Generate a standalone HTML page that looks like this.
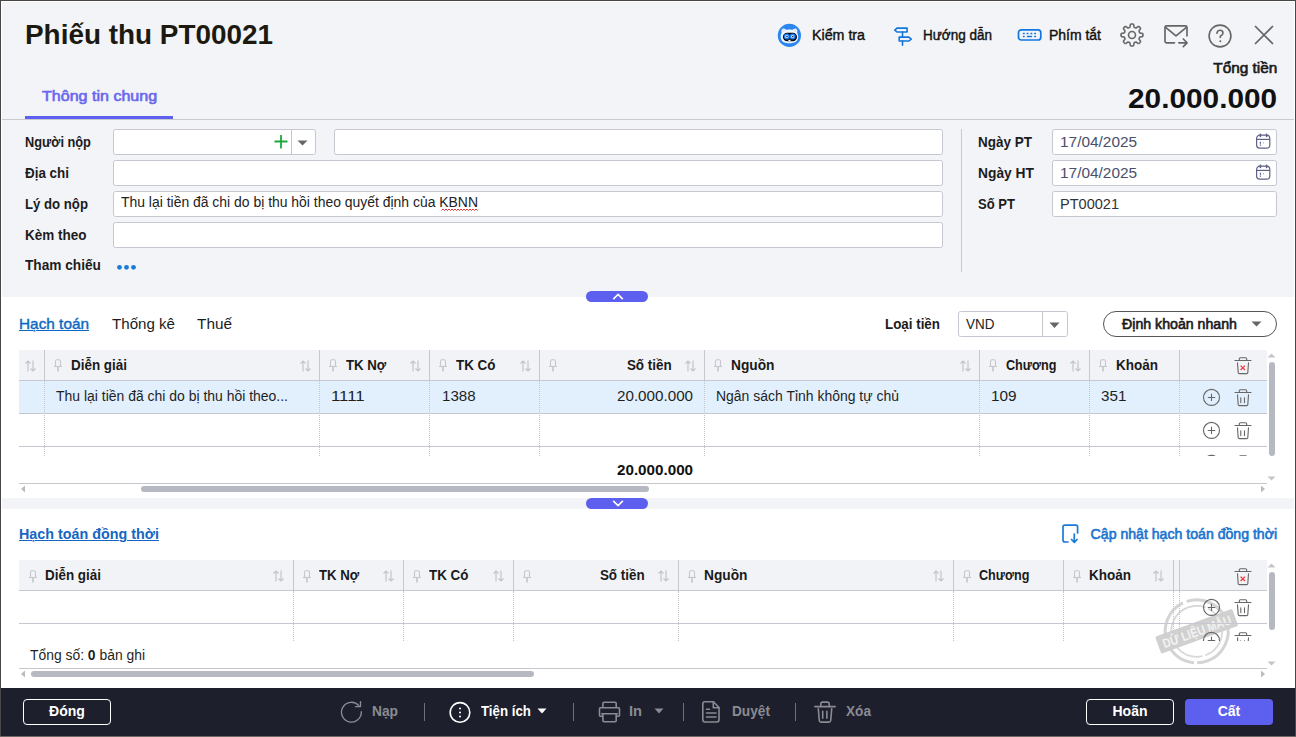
<!DOCTYPE html>
<html><head><meta charset="utf-8"><style>
html,body{margin:0;padding:0;width:1296px;height:737px;overflow:hidden;background:#fff}
body{position:relative;font-family:"Liberation Sans", sans-serif}
.t{position:absolute;white-space:nowrap;line-height:1}
svg{overflow:visible}
</style></head><body>
<div style="position:absolute;left:0px;top:0px;width:1296px;height:737px;background:#484746"></div>
<div style="position:absolute;left:1px;top:1px;width:1294px;height:735px;background:#ffffff"></div>
<div style="position:absolute;left:2px;top:2px;width:1292px;height:117px;background:#f3f4f8"></div>
<div style="position:absolute;left:2px;top:119px;width:1292px;height:1px;background:#c9cacf"></div>
<div style="position:absolute;left:2px;top:120px;width:1292px;height:177px;background:#f3f4f8"></div>
<div style="position:absolute;left:2px;top:498px;width:1292px;height:11px;background:#f3f4f8"></div>
<div style="position:absolute;left:1px;top:688px;width:1294px;height:48px;background:#1e1f2d"></div>
<div style="position:absolute;left:0px;top:736px;width:1296px;height:1px;background:#6b6865"></div>
<div class="t" style="top:20.59px;font-size:27.3px;font-weight:700;color:#1c1a10;left:25.3px;transform:scaleX(1.0218);transform-origin:left;">Phiếu thu PT00021</div>
<svg style="position:absolute;left:777px;top:23px;" width="25" height="25" viewBox="0 0 25 25"><circle cx="12.4" cy="12.4" r="11.6" fill="#2b86f0"/>
<path d="M4.6 10 C4.2 7.5 4.6 5.6 6.2 5.4 C7.6 5.3 8.8 6.2 9.6 6.9 C11.4 6.5 13.4 6.5 15.2 6.9 C16 6.2 17.2 5.3 18.6 5.4 C20.2 5.6 20.6 7.5 20.2 10 C21.4 12 21.4 14.5 20.6 16.5 C19.2 19.6 16 20.2 12.4 20.2 C8.8 20.2 5.6 19.6 4.2 16.5 C3.4 14.5 3.4 12 4.6 10 Z" fill="#f2f7ff"/><path d="M5.6 9 C5.5 7.4 5.8 6.4 6.6 6.4 C7.4 6.4 8.2 7 8.6 7.6 Z M19.2 9 C19.3 7.4 19 6.4 18.2 6.4 C17.4 6.4 16.6 7 16.2 7.6 Z" fill="#cfe0fb"/>
<rect x="5.9" y="9.8" width="14.1" height="8.5" rx="4.2" fill="#050608"/>
<circle cx="9.8" cy="13.6" r="3" fill="#1f7ff0"/><circle cx="15.6" cy="13.6" r="3" fill="#1f7ff0"/>
<circle cx="9.8" cy="13.6" r="1.5" fill="#e8f0ff"/><circle cx="15.6" cy="13.6" r="1.5" fill="#e8f0ff"/>
<circle cx="10" cy="13.6" r="0.8" fill="#1a1f3a"/><circle cx="15.8" cy="13.6" r="0.8" fill="#1a1f3a"/>
<rect x="11.4" y="16.8" width="2.2" height="1.2" fill="#fff"/></svg>
<div class="t" style="top:28.15px;font-size:14px;font-weight:400;color:#111;-webkit-text-stroke:0.4px #111;left:812.3px;transform:scaleX(1.0171);transform-origin:left;">Kiểm tra</div>
<svg style="position:absolute;left:893px;top:26px;" width="20" height="20" viewBox="0 0 20 20"><g fill="none" stroke="#1177dd" stroke-width="1.6" stroke-linejoin="round" stroke-linecap="round">
<path d="M4 2.1 H14.1 V6.0 H4 L1.8 4.05 Z"/><path d="M6.2 11.1 H15.9 L18.3 13.05 L15.9 15.0 H6.2 Z"/><path d="M9.5 6.0 V11.1 M9.5 15.0 V19.2"/></g></svg>
<div class="t" style="top:27.85px;font-size:14px;font-weight:400;color:#111;-webkit-text-stroke:0.4px #111;left:922.8px;transform:scaleX(0.9648);transform-origin:left;">Hướng dẫn</div>
<svg style="position:absolute;left:1017px;top:28px;" width="25" height="14" viewBox="0 0 25 14"><rect x="1.5" y="1.8" width="22.3" height="10.2" rx="2.8" fill="none" stroke="#1177dd" stroke-width="1.7"/>
<g fill="#1177dd"><rect x="5.8" y="4.8" width="2" height="1.5" rx="0.5"/><rect x="9.5" y="4.8" width="2" height="1.5" rx="0.5"/><rect x="13.4" y="4.8" width="2" height="1.5" rx="0.5"/><rect x="17.1" y="4.8" width="2" height="1.5" rx="0.5"/>
<rect x="5.8" y="7.8" width="2" height="1.5" rx="0.5"/><rect x="9.9" y="7.8" width="5.3" height="1.5" rx="0.5"/><rect x="17.1" y="7.8" width="2" height="1.5" rx="0.5"/></g></svg>
<div class="t" style="top:27.85px;font-size:14px;font-weight:400;color:#111;-webkit-text-stroke:0.4px #111;left:1049.3px;transform:scaleX(0.9973);transform-origin:left;">Phím tắt</div>
<svg style="position:absolute;left:1120px;top:23px;" width="24" height="24" viewBox="0 0 24 24"><path d="M12.00 1.00 L12.29 1.01 L12.57 1.03 L12.86 1.08 L13.14 1.18 L13.40 1.37 L13.63 1.74 L13.79 2.36 L13.89 3.11 L13.99 3.72 L14.12 4.10 L14.28 4.31 L14.46 4.44 L14.64 4.54 L14.83 4.62 L15.02 4.70 L15.21 4.78 L15.41 4.85 L15.61 4.92 L15.83 4.95 L16.09 4.92 L16.45 4.74 L16.95 4.38 L17.56 3.92 L18.11 3.59 L18.53 3.49 L18.85 3.54 L19.11 3.67 L19.35 3.84 L19.57 4.02 L19.78 4.22 L19.98 4.43 L20.16 4.65 L20.33 4.89 L20.46 5.15 L20.51 5.47 L20.41 5.89 L20.08 6.44 L19.62 7.05 L19.26 7.55 L19.08 7.91 L19.05 8.17 L19.08 8.39 L19.15 8.59 L19.22 8.79 L19.30 8.98 L19.38 9.17 L19.46 9.36 L19.56 9.54 L19.69 9.72 L19.90 9.88 L20.28 10.01 L20.89 10.11 L21.64 10.21 L22.26 10.37 L22.63 10.60 L22.82 10.86 L22.92 11.14 L22.97 11.43 L22.99 11.71 L23.00 12.00 L22.99 12.29 L22.97 12.57 L22.92 12.86 L22.82 13.14 L22.63 13.40 L22.26 13.63 L21.64 13.79 L20.89 13.89 L20.28 13.99 L19.90 14.12 L19.69 14.28 L19.56 14.46 L19.46 14.64 L19.38 14.83 L19.30 15.02 L19.22 15.21 L19.15 15.41 L19.08 15.61 L19.05 15.83 L19.08 16.09 L19.26 16.45 L19.62 16.95 L20.08 17.56 L20.41 18.11 L20.51 18.53 L20.46 18.85 L20.33 19.11 L20.16 19.35 L19.98 19.57 L19.78 19.78 L19.57 19.98 L19.35 20.16 L19.11 20.33 L18.85 20.46 L18.53 20.51 L18.11 20.41 L17.56 20.08 L16.95 19.62 L16.45 19.26 L16.09 19.08 L15.83 19.05 L15.61 19.08 L15.41 19.15 L15.21 19.22 L15.02 19.30 L14.83 19.38 L14.64 19.46 L14.46 19.56 L14.28 19.69 L14.12 19.90 L13.99 20.28 L13.89 20.89 L13.79 21.64 L13.63 22.26 L13.40 22.63 L13.14 22.82 L12.86 22.92 L12.57 22.97 L12.29 22.99 L12.00 23.00 L11.71 22.99 L11.43 22.97 L11.14 22.92 L10.86 22.82 L10.60 22.63 L10.37 22.26 L10.21 21.64 L10.11 20.89 L10.01 20.28 L9.88 19.90 L9.72 19.69 L9.54 19.56 L9.36 19.46 L9.17 19.38 L8.98 19.30 L8.79 19.22 L8.59 19.15 L8.39 19.08 L8.17 19.05 L7.91 19.08 L7.55 19.26 L7.05 19.62 L6.44 20.08 L5.89 20.41 L5.47 20.51 L5.15 20.46 L4.89 20.33 L4.65 20.16 L4.43 19.98 L4.22 19.78 L4.02 19.57 L3.84 19.35 L3.67 19.11 L3.54 18.85 L3.49 18.53 L3.59 18.11 L3.92 17.56 L4.38 16.95 L4.74 16.45 L4.92 16.09 L4.95 15.83 L4.92 15.61 L4.85 15.41 L4.78 15.21 L4.70 15.02 L4.62 14.83 L4.54 14.64 L4.44 14.46 L4.31 14.28 L4.10 14.12 L3.72 13.99 L3.11 13.89 L2.36 13.79 L1.74 13.63 L1.37 13.40 L1.18 13.14 L1.08 12.86 L1.03 12.57 L1.01 12.29 L1.00 12.00 L1.01 11.71 L1.03 11.43 L1.08 11.14 L1.18 10.86 L1.37 10.60 L1.74 10.37 L2.36 10.21 L3.11 10.11 L3.72 10.01 L4.10 9.88 L4.31 9.72 L4.44 9.54 L4.54 9.36 L4.62 9.17 L4.70 8.98 L4.78 8.79 L4.85 8.59 L4.92 8.39 L4.95 8.17 L4.92 7.91 L4.74 7.55 L4.38 7.05 L3.92 6.44 L3.59 5.89 L3.49 5.47 L3.54 5.15 L3.67 4.89 L3.84 4.65 L4.02 4.43 L4.22 4.22 L4.43 4.02 L4.65 3.84 L4.89 3.67 L5.15 3.54 L5.47 3.49 L5.89 3.59 L6.44 3.92 L7.05 4.38 L7.55 4.74 L7.91 4.92 L8.17 4.95 L8.39 4.92 L8.59 4.85 L8.79 4.78 L8.98 4.70 L9.17 4.62 L9.36 4.54 L9.54 4.44 L9.72 4.31 L9.88 4.10 L10.01 3.72 L10.11 3.11 L10.21 2.36 L10.37 1.74 L10.60 1.37 L10.86 1.18 L11.14 1.08 L11.43 1.03 L11.71 1.01Z" fill="none" stroke="#666" stroke-width="1.6" stroke-linejoin="round"/><circle cx="12" cy="12" r="3.5" fill="none" stroke="#666" stroke-width="1.6"/></svg>
<svg style="position:absolute;left:1163px;top:24px;" width="26" height="24" viewBox="0 0 26 24"><g fill="none" stroke="#666" stroke-width="1.65" stroke-linecap="round" stroke-linejoin="round">
<path d="M11.5 18.8 H3.5 Q2 18.8 2 17.3 V3.2 Q2 1.9 3.5 1.9 H22.5 Q24 1.9 24 3.4 V12"/><path d="M2.6 3.3 L13 11.8 L23.4 3.3"/>
<path d="M15.8 18.8 H24 M20.3 15 L24.1 18.8 L20.3 22.6"/></g></svg>
<svg style="position:absolute;left:1207px;top:23px;" width="26" height="26" viewBox="0 0 26 26"><circle cx="13" cy="13" r="10.9" fill="none" stroke="#666" stroke-width="1.6"/>
<path d="M9.9 10.3 Q10.2 7.2 13.1 7.2 Q16 7.2 16 10 Q16 12 13.3 13.2 V14.5" fill="none" stroke="#666" stroke-width="1.6" stroke-linecap="round"/><circle cx="13.3" cy="18.3" r="1" fill="#666"/></svg>
<svg style="position:absolute;left:1253px;top:24px;" width="22" height="22" viewBox="0 0 22 22"><path d="M2 2 L20 20 M20 2 L2 20" stroke="#666" stroke-width="1.7"/></svg>
<div class="t" style="top:61.15px;font-size:14px;font-weight:400;color:#1a1a1a;-webkit-text-stroke:0.6px #1a1a1a;right:19px;transform:scaleX(1.0980);transform-origin:right;">Tổng tiền</div>
<div class="t" style="top:85.94px;font-size:27px;font-weight:700;color:#111;right:19px;transform:scaleX(1.1033);transform-origin:right;">20.000.000</div>
<div class="t" style="top:89.25px;font-size:14px;font-weight:400;color:#6a67ee;-webkit-text-stroke:0.6px #6a67ee;left:42px;transform:scaleX(1.1468);transform-origin:left;">Thông tin chung</div>
<div style="position:absolute;left:25px;top:116px;width:148px;height:3px;background:#5d5fef"></div>
<div class="t" style="top:134.95px;font-size:14px;font-weight:700;color:#1c1c1c;left:25.3px;transform:scaleX(0.9131);transform-origin:left;">Người nộp</div>
<div class="t" style="top:165.85px;font-size:14px;font-weight:700;color:#1c1c1c;left:25.3px;transform:scaleX(0.9576);transform-origin:left;">Địa chỉ</div>
<div class="t" style="top:196.85px;font-size:14px;font-weight:700;color:#1c1c1c;left:25.3px;transform:scaleX(0.9410);transform-origin:left;">Lý do nộp</div>
<div class="t" style="top:227.85px;font-size:14px;font-weight:700;color:#1c1c1c;left:25.3px;transform:scaleX(0.9634);transform-origin:left;">Kèm theo</div>
<div class="t" style="top:258.15px;font-size:14px;font-weight:700;color:#1c1c1c;left:25.3px;transform:scaleX(0.9766);transform-origin:left;">Tham chiếu</div>
<div style="position:absolute;left:113px;top:129px;width:203px;height:26px;background:#fff;border:1px solid #c5c8d1;border-radius:2.5px;box-sizing:border-box;"></div>
<div style="position:absolute;left:291px;top:130px;width:1px;height:24px;background:#c5c7cd"></div>
<svg style="position:absolute;left:273px;top:134px;" width="15" height="15" viewBox="0 0 15 15"><path d="M8 1 V14.5 M1.5 7.5 H14.5" stroke="#1fa83a" stroke-width="1.8"/></svg>
<svg style="position:absolute;left:297px;top:140px;" width="11" height="6" viewBox="0 0 11 6"><path d="M0.5 0.5 H10.5 L5.5 5.5Z" fill="#666"/></svg>
<div style="position:absolute;left:334px;top:129px;width:609px;height:26px;background:#fff;border:1px solid #c5c8d1;border-radius:2.5px;box-sizing:border-box;"></div>
<div style="position:absolute;left:113px;top:160px;width:830px;height:26px;background:#fff;border:1px solid #c5c8d1;border-radius:2.5px;box-sizing:border-box;"></div>
<div style="position:absolute;left:113px;top:191px;width:830px;height:26px;background:#fff;border:1px solid #c5c8d1;border-radius:2.5px;box-sizing:border-box;"></div>
<div class="t" style="top:194.75px;font-size:14px;font-weight:400;color:#222;left:121.3px;transform:scaleX(0.9950);transform-origin:left;">Thu lại tiền đã chi do bị thu hồi theo quyết định của KBNN</div>
<svg style="position:absolute;left:441px;top:208px;" width="38" height="4" viewBox="0 0 38 4"><path d="M0.5 2.5 L2 1 L3.5 2.5 L5 1 L6.5 2.5 L8 1 L9.5 2.5 L11 1 L12.5 2.5 L14 1 L15.5 2.5 L17 1 L18.5 2.5 L20 1 L21.5 2.5 L23 1 L24.5 2.5 L26 1 L27.5 2.5 L29 1 L30.5 2.5 L32 1 L33.5 2.5 L35 1 L36.5 2.5" fill="none" stroke="#e02020" stroke-width="0.9"/></svg>
<div style="position:absolute;left:113px;top:222px;width:830px;height:26px;background:#fff;border:1px solid #c5c8d1;border-radius:2.5px;box-sizing:border-box;"></div>
<svg style="position:absolute;left:116px;top:264px;" width="22" height="7" viewBox="0 0 22 7"><g fill="#1b7ad6"><circle cx="3.5" cy="3.3" r="2.4"/><circle cx="10.5" cy="3.3" r="2.4"/><circle cx="17.5" cy="3.3" r="2.4"/></g></svg>
<div style="position:absolute;left:961px;top:129px;width:1px;height:143px;background:#c9cacf"></div>
<div class="t" style="top:134.95px;font-size:14px;font-weight:700;color:#1c1c1c;left:978.3px;transform:scaleX(0.9634);transform-origin:left;">Ngày PT</div>
<div class="t" style="top:165.85px;font-size:14px;font-weight:700;color:#1c1c1c;left:978.3px;transform:scaleX(0.9857);transform-origin:left;">Ngày HT</div>
<div class="t" style="top:196.85px;font-size:14px;font-weight:700;color:#1c1c1c;left:978.3px;transform:scaleX(0.9309);transform-origin:left;">Số PT</div>
<div style="position:absolute;left:1052px;top:129px;width:225px;height:26px;background:#fff;border:1px solid #c5c8d1;border-radius:2.5px;box-sizing:border-box;"></div>
<div style="position:absolute;left:1052px;top:160px;width:225px;height:26px;background:#fff;border:1px solid #c5c8d1;border-radius:2.5px;box-sizing:border-box;"></div>
<div style="position:absolute;left:1052px;top:191px;width:225px;height:26px;background:#fff;border:1px solid #c5c8d1;border-radius:2.5px;box-sizing:border-box;"></div>
<div class="t" style="top:135.35px;font-size:14px;font-weight:400;color:#4a4f6a;left:1060px;transform:scaleX(1.1002);transform-origin:left;">17/04/2025</div>
<div class="t" style="top:166.35px;font-size:14px;font-weight:400;color:#4a4f6a;left:1060px;transform:scaleX(1.1002);transform-origin:left;">17/04/2025</div>
<div class="t" style="top:197.15px;font-size:14px;font-weight:400;color:#333;left:1060px;transform:scaleX(1.0389);transform-origin:left;">PT00021</div>
<svg style="position:absolute;left:1256px;top:133px;" width="15" height="17" viewBox="0 0 15 17"><g fill="none" stroke="#5e6384" stroke-width="1.2"><rect x="0.6" y="2.2" width="13.2" height="13" rx="3.2"/><path d="M0.6 6.4 H13.8"/></g><path d="M4.4 1.3 V3.3 M10.6 1.3 V3.3" stroke="#5e6384" stroke-width="1.7" stroke-linecap="round"/><g fill="#5e6384"><rect x="3.8" y="8.8" width="1.2" height="2"/><rect x="6.8" y="9.2" width="1.2" height="1.2" opacity="0.5"/><rect x="3.8" y="11.5" width="1.3" height="1.2"/></g></svg>
<svg style="position:absolute;left:1256px;top:164px;" width="15" height="17" viewBox="0 0 15 17"><g fill="none" stroke="#5e6384" stroke-width="1.2"><rect x="0.6" y="2.2" width="13.2" height="13" rx="3.2"/><path d="M0.6 6.4 H13.8"/></g><path d="M4.4 1.3 V3.3 M10.6 1.3 V3.3" stroke="#5e6384" stroke-width="1.7" stroke-linecap="round"/><g fill="#5e6384"><rect x="3.8" y="8.8" width="1.2" height="2"/><rect x="6.8" y="9.2" width="1.2" height="1.2" opacity="0.5"/><rect x="3.8" y="11.5" width="1.3" height="1.2"/></g></svg>
<svg style="position:absolute;left:586px;top:291px;" width="62" height="11" viewBox="0 0 62 11"><rect x="0" y="0" width="62" height="11" rx="5.5" fill="#5d5fef"/><path d="M27.3 8.1 L32.05 3.35 L36.8 8.1" fill="none" stroke="#fff" stroke-width="1.6"/></svg>
<div class="t" style="top:315.90px;font-size:15px;font-weight:400;color:#0d68c4;-webkit-text-stroke:0.4px #0d68c4;left:18.5px;transform:scaleX(1.0239);transform-origin:left;text-decoration:underline;text-underline-offset:1px;text-decoration-thickness:1.3px;">Hạch toán</div>
<div class="t" style="top:315.90px;font-size:15px;font-weight:400;color:#1c1c1c;left:111.5px;transform:scaleX(1.0074);transform-origin:left;">Thống kê</div>
<div class="t" style="top:315.90px;font-size:15px;font-weight:400;color:#1c1c1c;left:196.5px;transform:scaleX(1.0240);transform-origin:left;">Thuế</div>
<div class="t" style="top:316.85px;font-size:14px;font-weight:700;color:#1c1c1c;left:885.3px;transform:scaleX(0.9547);transform-origin:left;">Loại tiền</div>
<div style="position:absolute;left:958px;top:311px;width:110px;height:26px;background:#fff;border:1px solid #c5c8d1;border-radius:2.5px;box-sizing:border-box;"></div>
<div style="position:absolute;left:1042px;top:312px;width:1px;height:24px;background:#c5c7cd"></div>
<svg style="position:absolute;left:1049px;top:322px;" width="11" height="7" viewBox="0 0 11 7"><path d="M0.5 0.5 H10.5 L5.5 6Z" fill="#666"/></svg>
<div class="t" style="top:317.15px;font-size:14px;font-weight:400;color:#222;left:966px;transform:scaleX(0.9628);transform-origin:left;">VND</div>
<div style="position:absolute;left:1103px;top:311px;width:174px;height:26px;border:1px solid #555;border-radius:13px;box-sizing:border-box;background:#fff"></div>
<div class="t" style="top:316.65px;font-size:14px;font-weight:400;color:#1a1a1a;-webkit-text-stroke:0.6px #1a1a1a;left:1122px;transform:scaleX(1.0119);transform-origin:left;">Định khoản nhanh</div>
<svg style="position:absolute;left:1251px;top:321px;" width="11" height="6" viewBox="0 0 11 6"><path d="M0.5 0.5 H10.5 L5.5 5.5Z" fill="#666"/></svg>
<div style="position:absolute;left:19px;top:350px;width:1248px;height:30px;background:#f2f3f7"></div>
<div style="position:absolute;left:19px;top:380px;width:1248px;height:1px;background:#c5c8d0"></div>
<div style="position:absolute;left:19px;top:381px;width:1248px;height:32px;background:#e2f0fd"></div>
<div style="position:absolute;left:19px;top:413px;width:1248px;height:1px;background:#c5c8d0"></div>
<div style="position:absolute;left:19px;top:446px;width:1248px;height:1px;background:#c5c8d0"></div>
<div style="position:absolute;left:44px;top:350px;width:1px;height:30px;background:#c5c8d0"></div>
<div style="position:absolute;left:44px;top:381px;width:0px;height:75px;border-left:1px dotted #c3c5cb"></div>
<div style="position:absolute;left:319px;top:350px;width:1px;height:30px;background:#c5c8d0"></div>
<div style="position:absolute;left:319px;top:381px;width:0px;height:75px;border-left:1px dotted #c3c5cb"></div>
<div style="position:absolute;left:429px;top:350px;width:1px;height:30px;background:#c5c8d0"></div>
<div style="position:absolute;left:429px;top:381px;width:0px;height:75px;border-left:1px dotted #c3c5cb"></div>
<div style="position:absolute;left:539px;top:350px;width:1px;height:30px;background:#c5c8d0"></div>
<div style="position:absolute;left:539px;top:381px;width:0px;height:75px;border-left:1px dotted #c3c5cb"></div>
<div style="position:absolute;left:704px;top:350px;width:1px;height:30px;background:#c5c8d0"></div>
<div style="position:absolute;left:704px;top:381px;width:0px;height:75px;border-left:1px dotted #c3c5cb"></div>
<div style="position:absolute;left:979px;top:350px;width:1px;height:30px;background:#c5c8d0"></div>
<div style="position:absolute;left:979px;top:381px;width:0px;height:75px;border-left:1px dotted #c3c5cb"></div>
<div style="position:absolute;left:1089px;top:350px;width:1px;height:30px;background:#c5c8d0"></div>
<div style="position:absolute;left:1089px;top:381px;width:0px;height:75px;border-left:1px dotted #c3c5cb"></div>
<div style="position:absolute;left:1179px;top:350px;width:1px;height:30px;background:#c5c8d0"></div>
<div style="position:absolute;left:1179px;top:381px;width:0px;height:75px;border-left:1px dotted #c3c5cb"></div>
<svg style="position:absolute;left:25px;top:360px;" width="11" height="12" viewBox="0 0 11 12"><g fill="none" stroke="#c3c5cb" stroke-width="1.2"><path d="M3 11.5 V1 M0.5 3.5 L3 1 L5.5 3.5"/><path d="M8 0.5 V11 M5.5 8.5 L8 11 L10.5 8.5"/></g></svg>
<svg style="position:absolute;left:54px;top:359px;" width="9" height="13" viewBox="0 0 9 13"><g fill="none" stroke="#c6c8ce" stroke-width="1.1"><path d="M1.5 7.2 V2.2 Q1.5 0.8 2.9 0.8 H5.1 Q6.5 0.8 6.5 2.2 V7.2"/><path d="M0 7.5 H8"/></g><path d="M4 7.8 V12.6" stroke="#c6c8ce" stroke-width="1.7"/></svg>
<div class="t" style="top:357.85px;font-size:14px;font-weight:700;color:#1a1a1a;left:70.9px;transform:scaleX(0.9589);transform-origin:left;">Diễn giải</div>
<svg style="position:absolute;left:300px;top:360px;" width="11" height="12" viewBox="0 0 11 12"><g fill="none" stroke="#c3c5cb" stroke-width="1.2"><path d="M3 11.5 V1 M0.5 3.5 L3 1 L5.5 3.5"/><path d="M8 0.5 V11 M5.5 8.5 L8 11 L10.5 8.5"/></g></svg>
<svg style="position:absolute;left:329px;top:359px;" width="9" height="13" viewBox="0 0 9 13"><g fill="none" stroke="#c6c8ce" stroke-width="1.1"><path d="M1.5 7.2 V2.2 Q1.5 0.8 2.9 0.8 H5.1 Q6.5 0.8 6.5 2.2 V7.2"/><path d="M0 7.5 H8"/></g><path d="M4 7.8 V12.6" stroke="#c6c8ce" stroke-width="1.7"/></svg>
<div class="t" style="top:357.85px;font-size:14px;font-weight:700;color:#1a1a1a;left:345.9px;transform:scaleX(0.9441);transform-origin:left;">TK Nợ</div>
<svg style="position:absolute;left:410px;top:360px;" width="11" height="12" viewBox="0 0 11 12"><g fill="none" stroke="#c3c5cb" stroke-width="1.2"><path d="M3 11.5 V1 M0.5 3.5 L3 1 L5.5 3.5"/><path d="M8 0.5 V11 M5.5 8.5 L8 11 L10.5 8.5"/></g></svg>
<svg style="position:absolute;left:439px;top:359px;" width="9" height="13" viewBox="0 0 9 13"><g fill="none" stroke="#c6c8ce" stroke-width="1.1"><path d="M1.5 7.2 V2.2 Q1.5 0.8 2.9 0.8 H5.1 Q6.5 0.8 6.5 2.2 V7.2"/><path d="M0 7.5 H8"/></g><path d="M4 7.8 V12.6" stroke="#c6c8ce" stroke-width="1.7"/></svg>
<div class="t" style="top:357.85px;font-size:14px;font-weight:700;color:#1a1a1a;left:455.9px;transform:scaleX(0.9573);transform-origin:left;">TK Có</div>
<svg style="position:absolute;left:520px;top:360px;" width="11" height="12" viewBox="0 0 11 12"><g fill="none" stroke="#c3c5cb" stroke-width="1.2"><path d="M3 11.5 V1 M0.5 3.5 L3 1 L5.5 3.5"/><path d="M8 0.5 V11 M5.5 8.5 L8 11 L10.5 8.5"/></g></svg>
<svg style="position:absolute;left:549px;top:359px;" width="9" height="13" viewBox="0 0 9 13"><g fill="none" stroke="#c6c8ce" stroke-width="1.1"><path d="M1.5 7.2 V2.2 Q1.5 0.8 2.9 0.8 H5.1 Q6.5 0.8 6.5 2.2 V7.2"/><path d="M0 7.5 H8"/></g><path d="M4 7.8 V12.6" stroke="#c6c8ce" stroke-width="1.7"/></svg>
<div class="t" style="top:357.85px;font-size:14px;font-weight:700;color:#1a1a1a;right:624px;transform:scaleX(0.9590);transform-origin:right;">Số tiền</div>
<svg style="position:absolute;left:685px;top:360px;" width="11" height="12" viewBox="0 0 11 12"><g fill="none" stroke="#c3c5cb" stroke-width="1.2"><path d="M3 11.5 V1 M0.5 3.5 L3 1 L5.5 3.5"/><path d="M8 0.5 V11 M5.5 8.5 L8 11 L10.5 8.5"/></g></svg>
<svg style="position:absolute;left:714px;top:359px;" width="9" height="13" viewBox="0 0 9 13"><g fill="none" stroke="#c6c8ce" stroke-width="1.1"><path d="M1.5 7.2 V2.2 Q1.5 0.8 2.9 0.8 H5.1 Q6.5 0.8 6.5 2.2 V7.2"/><path d="M0 7.5 H8"/></g><path d="M4 7.8 V12.6" stroke="#c6c8ce" stroke-width="1.7"/></svg>
<div class="t" style="top:357.85px;font-size:14px;font-weight:700;color:#1a1a1a;left:730.9px;transform:scaleX(0.9809);transform-origin:left;">Nguồn</div>
<svg style="position:absolute;left:960px;top:360px;" width="11" height="12" viewBox="0 0 11 12"><g fill="none" stroke="#c3c5cb" stroke-width="1.2"><path d="M3 11.5 V1 M0.5 3.5 L3 1 L5.5 3.5"/><path d="M8 0.5 V11 M5.5 8.5 L8 11 L10.5 8.5"/></g></svg>
<svg style="position:absolute;left:989px;top:359px;" width="9" height="13" viewBox="0 0 9 13"><g fill="none" stroke="#c6c8ce" stroke-width="1.1"><path d="M1.5 7.2 V2.2 Q1.5 0.8 2.9 0.8 H5.1 Q6.5 0.8 6.5 2.2 V7.2"/><path d="M0 7.5 H8"/></g><path d="M4 7.8 V12.6" stroke="#c6c8ce" stroke-width="1.7"/></svg>
<div class="t" style="top:357.85px;font-size:14px;font-weight:700;color:#1a1a1a;left:1005.9px;transform:scaleX(0.9023);transform-origin:left;">Chương</div>
<svg style="position:absolute;left:1070px;top:360px;" width="11" height="12" viewBox="0 0 11 12"><g fill="none" stroke="#c3c5cb" stroke-width="1.2"><path d="M3 11.5 V1 M0.5 3.5 L3 1 L5.5 3.5"/><path d="M8 0.5 V11 M5.5 8.5 L8 11 L10.5 8.5"/></g></svg>
<svg style="position:absolute;left:1099px;top:359px;" width="9" height="13" viewBox="0 0 9 13"><g fill="none" stroke="#c6c8ce" stroke-width="1.1"><path d="M1.5 7.2 V2.2 Q1.5 0.8 2.9 0.8 H5.1 Q6.5 0.8 6.5 2.2 V7.2"/><path d="M0 7.5 H8"/></g><path d="M4 7.8 V12.6" stroke="#c6c8ce" stroke-width="1.7"/></svg>
<div class="t" style="top:357.85px;font-size:14px;font-weight:700;color:#1a1a1a;left:1115.9px;transform:scaleX(0.9633);transform-origin:left;">Khoản</div>
<div class="t" style="top:388.75px;font-size:14px;font-weight:400;color:#1f1f1f;left:56.3px;transform:scaleX(0.9969);transform-origin:left;">Thu lại tiền đã chi do bị thu hồi theo...</div>
<div class="t" style="top:388.75px;font-size:14px;font-weight:400;color:#1f1f1f;left:331.3px;transform:scaleX(1.2023);transform-origin:left;">1111</div>
<div class="t" style="top:388.75px;font-size:14px;font-weight:400;color:#1f1f1f;left:441.5px;transform:scaleX(1.0777);transform-origin:left;">1388</div>
<div class="t" style="top:388.75px;font-size:14px;font-weight:400;color:#1f1f1f;right:603px;transform:scaleX(1.0857);transform-origin:right;">20.000.000</div>
<div class="t" style="top:388.75px;font-size:14px;font-weight:400;color:#1f1f1f;left:716px;transform:scaleX(0.9975);transform-origin:left;">Ngân sách Tỉnh không tự chủ</div>
<div class="t" style="top:388.75px;font-size:14px;font-weight:400;color:#1f1f1f;left:991.3px;transform:scaleX(1.0957);transform-origin:left;">109</div>
<div class="t" style="top:388.75px;font-size:14px;font-weight:400;color:#1f1f1f;left:1101.3px;transform:scaleX(1.0868);transform-origin:left;">351</div>
<svg style="position:absolute;left:1234px;top:357px;" width="18" height="18" viewBox="0 0 18 18"><g fill="none" stroke="#666" stroke-width="1.1" stroke-linecap="round" stroke-linejoin="round"><path d="M1 3.5 H17"/><path d="M5.3 3.5 V1.9 Q5.3 0.8 6.4 0.8 H11.6 Q12.7 0.8 12.7 1.9 V3.5"/><path d="M3.5 5.8 L4.2 15.6 Q4.3 16.6 5.3 16.6 H12.7 Q13.7 16.6 13.8 15.6 L14.5 5.8"/></g><path d="M6.6 8.6 L11 13 M11 8.6 L6.6 13" stroke="#f03a3a" stroke-width="1.3"/></svg>
<svg style="position:absolute;left:1202px;top:388px;" width="19" height="19" viewBox="0 0 19 19"><circle cx="9.5" cy="9.4" r="8" fill="none" stroke="#666" stroke-width="1.1"/><path d="M9.5 5.8 V13.1 M5.8 9.5 H13.2" stroke="#666" stroke-width="1.1"/></svg>
<svg style="position:absolute;left:1234px;top:389px;" width="18" height="18" viewBox="0 0 18 18"><g fill="none" stroke="#666" stroke-width="1.1" stroke-linecap="round" stroke-linejoin="round"><path d="M1 3.5 H17"/><path d="M5.3 3.5 V1.9 Q5.3 0.8 6.4 0.8 H11.6 Q12.7 0.8 12.7 1.9 V3.5"/><path d="M3.5 5.8 L4.2 15.6 Q4.3 16.6 5.3 16.6 H12.7 Q13.7 16.6 13.8 15.6 L14.5 5.8"/><path d="M6.8 8.8 V13.6 M10.5 8.8 V13.6"/></g></svg>
<svg style="position:absolute;left:1202px;top:421px;" width="19" height="19" viewBox="0 0 19 19"><circle cx="9.5" cy="9.4" r="8" fill="none" stroke="#666" stroke-width="1.1"/><path d="M9.5 5.8 V13.1 M5.8 9.5 H13.2" stroke="#666" stroke-width="1.1"/></svg>
<svg style="position:absolute;left:1234px;top:422px;" width="18" height="18" viewBox="0 0 18 18"><g fill="none" stroke="#666" stroke-width="1.1" stroke-linecap="round" stroke-linejoin="round"><path d="M1 3.5 H17"/><path d="M5.3 3.5 V1.9 Q5.3 0.8 6.4 0.8 H11.6 Q12.7 0.8 12.7 1.9 V3.5"/><path d="M3.5 5.8 L4.2 15.6 Q4.3 16.6 5.3 16.6 H12.7 Q13.7 16.6 13.8 15.6 L14.5 5.8"/><path d="M6.8 8.8 V13.6 M10.5 8.8 V13.6"/></g></svg>
<div style="position:absolute;left:1202px;top:454px;width:21px;height:2px;overflow:hidden"><svg style="position:absolute;left:0;top:0;overflow:visible" width="19" height="19" viewBox="0 0 19 19"><circle cx="9.5" cy="9.4" r="8" fill="none" stroke="#666" stroke-width="1.1"/><path d="M9.5 5.8 V13.1 M5.8 9.5 H13.2" stroke="#666" stroke-width="1.1"/></svg></div>
<div style="position:absolute;left:1234px;top:455px;width:20px;height:1px;overflow:hidden"><svg style="position:absolute;left:0;top:0;overflow:visible" width="18" height="18" viewBox="0 0 18 18"><g fill="none" stroke="#666" stroke-width="1.1" stroke-linecap="round" stroke-linejoin="round"><path d="M1 3.5 H17"/><path d="M5.3 3.5 V1.9 Q5.3 0.8 6.4 0.8 H11.6 Q12.7 0.8 12.7 1.9 V3.5"/><path d="M3.5 5.8 L4.2 15.6 Q4.3 16.6 5.3 16.6 H12.7 Q13.7 16.6 13.8 15.6 L14.5 5.8"/><path d="M6.8 8.8 V13.6 M10.5 8.8 V13.6"/></g></svg></div>
<div class="t" style="top:463.15px;font-size:14px;font-weight:700;color:#111;right:602.5px;transform:scaleX(1.0857);transform-origin:right;">20.000.000</div>
<div style="position:absolute;left:19px;top:483px;width:1248px;height:1px;background:#c5c7cd"></div>
<svg style="position:absolute;left:20px;top:485px;" width="6" height="8" viewBox="0 0 6 8"><path d="M5 0.5 V7.5 L1 4Z" fill="#b9bcc3"/></svg>
<svg style="position:absolute;left:1260px;top:485px;" width="6" height="8" viewBox="0 0 6 8"><path d="M1 0.5 V7.5 L5 4Z" fill="#b9bcc3"/></svg>
<div style="position:absolute;left:141px;top:486px;width:508px;height:6px;background:#b6b9c1;border-radius:3px"></div>
<svg style="position:absolute;left:1267px;top:352px;" width="9" height="6" viewBox="0 0 9 6"><path d="M0.5 5.5 H8.5 L4.5 1.5Z" fill="#c3c5cb"/></svg>
<div style="position:absolute;left:1269px;top:362px;width:6px;height:94px;background:#b6b9c1;border-radius:3px"></div>
<svg style="position:absolute;left:1267px;top:476px;" width="9" height="6" viewBox="0 0 9 6"><path d="M0.5 0.5 H8.5 L4.5 4.5Z" fill="#c3c5cb"/></svg>
<svg style="position:absolute;left:586px;top:498px;" width="62" height="11" viewBox="0 0 62 11"><rect x="0" y="0" width="62" height="11" rx="5.5" fill="#5d5fef"/><path d="M27.2 2.9 L32.05 7.6 L36.9 2.9" fill="none" stroke="#fff" stroke-width="1.6"/></svg>
<div class="t" style="top:526.00px;font-size:15px;font-weight:600;color:#1566c2;left:19px;transform:scaleX(0.9554);transform-origin:left;text-decoration:underline;text-underline-offset:1px;text-decoration-thickness:1.3px;">Hạch toán đồng thời</div>
<svg style="position:absolute;left:1062px;top:524px;" width="18" height="20" viewBox="0 0 18 20"><g fill="none" stroke="#1b7ad6" stroke-width="1.7" stroke-linecap="round" stroke-linejoin="round"><path d="M6 18 H3 Q1 18 1 16 V3 Q1 1.2 3 1.2 H14 Q15.6 1.2 15.6 3 V9"/><path d="M12.3 10 V18.3 M9.5 15.5 L12.3 18.3 L15.1 15.5"/></g></svg>
<div class="t" style="top:527.15px;font-size:14px;font-weight:400;color:#1b74d0;-webkit-text-stroke:0.6px #1b74d0;right:19px;transform:scaleX(1.0076);transform-origin:right;">Cập nhật hạch toán đồng thời</div>
<div style="position:absolute;left:19px;top:560px;width:1248px;height:30px;background:#f2f3f7"></div>
<svg style="position:absolute;left:1150px;top:590px;" width="100" height="80" viewBox="0 0 100 80"><g transform="translate(46.7 41.3) rotate(-20)">
<circle r="31.5" fill="none" stroke="#d4d4d4" stroke-width="3" stroke-dasharray="60 3 30 2 50 4"/><circle r="25.5" fill="none" stroke="#d8d8d8" stroke-width="1.8" stroke-dasharray="40 3 30 4 60 3"/>
<rect x="-41" y="-9" width="82" height="18" rx="1.5" fill="#d0d0d0"/>
<text x="-36" y="5" textLength="72" lengthAdjust="spacingAndGlyphs" font-family="Liberation Sans" font-weight="700" font-size="13" fill="#f2f2f2">DỮ LIỆU MẪU</text></g></svg>
<div style="position:absolute;left:19px;top:590px;width:1248px;height:1px;background:#c5c8d0"></div>
<div style="position:absolute;left:19px;top:623px;width:1248px;height:1px;background:#c5c8d0"></div>
<div style="position:absolute;left:293px;top:560px;width:1px;height:30px;background:#c5c8d0"></div>
<div style="position:absolute;left:293px;top:591px;width:0px;height:50px;border-left:1px dotted #c3c5cb"></div>
<div style="position:absolute;left:403px;top:560px;width:1px;height:30px;background:#c5c8d0"></div>
<div style="position:absolute;left:403px;top:591px;width:0px;height:50px;border-left:1px dotted #c3c5cb"></div>
<div style="position:absolute;left:513px;top:560px;width:1px;height:30px;background:#c5c8d0"></div>
<div style="position:absolute;left:513px;top:591px;width:0px;height:50px;border-left:1px dotted #c3c5cb"></div>
<div style="position:absolute;left:678px;top:560px;width:1px;height:30px;background:#c5c8d0"></div>
<div style="position:absolute;left:678px;top:591px;width:0px;height:50px;border-left:1px dotted #c3c5cb"></div>
<div style="position:absolute;left:953px;top:560px;width:1px;height:30px;background:#c5c8d0"></div>
<div style="position:absolute;left:953px;top:591px;width:0px;height:50px;border-left:1px dotted #c3c5cb"></div>
<div style="position:absolute;left:1063px;top:560px;width:1px;height:30px;background:#c5c8d0"></div>
<div style="position:absolute;left:1063px;top:591px;width:0px;height:50px;border-left:1px dotted #c3c5cb"></div>
<div style="position:absolute;left:1173px;top:560px;width:1px;height:30px;background:#c5c8d0"></div>
<div style="position:absolute;left:1173px;top:591px;width:0px;height:50px;border-left:1px dotted #c3c5cb"></div>
<div style="position:absolute;left:1179px;top:560px;width:1px;height:30px;background:#c5c8d0"></div>
<div style="position:absolute;left:1179px;top:591px;width:0px;height:50px;border-left:1px dotted #c3c5cb"></div>
<svg style="position:absolute;left:29px;top:570px;" width="9" height="13" viewBox="0 0 9 13"><g fill="none" stroke="#c6c8ce" stroke-width="1.1"><path d="M1.5 7.2 V2.2 Q1.5 0.8 2.9 0.8 H5.1 Q6.5 0.8 6.5 2.2 V7.2"/><path d="M0 7.5 H8"/></g><path d="M4 7.8 V12.6" stroke="#c6c8ce" stroke-width="1.7"/></svg>
<div class="t" style="top:567.85px;font-size:14px;font-weight:700;color:#1a1a1a;left:44.9px;transform:scaleX(0.9589);transform-origin:left;">Diễn giải</div>
<svg style="position:absolute;left:273px;top:570px;" width="11" height="12" viewBox="0 0 11 12"><g fill="none" stroke="#c3c5cb" stroke-width="1.2"><path d="M3 11.5 V1 M0.5 3.5 L3 1 L5.5 3.5"/><path d="M8 0.5 V11 M5.5 8.5 L8 11 L10.5 8.5"/></g></svg>
<svg style="position:absolute;left:303px;top:570px;" width="9" height="13" viewBox="0 0 9 13"><g fill="none" stroke="#c6c8ce" stroke-width="1.1"><path d="M1.5 7.2 V2.2 Q1.5 0.8 2.9 0.8 H5.1 Q6.5 0.8 6.5 2.2 V7.2"/><path d="M0 7.5 H8"/></g><path d="M4 7.8 V12.6" stroke="#c6c8ce" stroke-width="1.7"/></svg>
<div class="t" style="top:567.85px;font-size:14px;font-weight:700;color:#1a1a1a;left:318.9px;transform:scaleX(0.9441);transform-origin:left;">TK Nợ</div>
<svg style="position:absolute;left:383px;top:570px;" width="11" height="12" viewBox="0 0 11 12"><g fill="none" stroke="#c3c5cb" stroke-width="1.2"><path d="M3 11.5 V1 M0.5 3.5 L3 1 L5.5 3.5"/><path d="M8 0.5 V11 M5.5 8.5 L8 11 L10.5 8.5"/></g></svg>
<svg style="position:absolute;left:413px;top:570px;" width="9" height="13" viewBox="0 0 9 13"><g fill="none" stroke="#c6c8ce" stroke-width="1.1"><path d="M1.5 7.2 V2.2 Q1.5 0.8 2.9 0.8 H5.1 Q6.5 0.8 6.5 2.2 V7.2"/><path d="M0 7.5 H8"/></g><path d="M4 7.8 V12.6" stroke="#c6c8ce" stroke-width="1.7"/></svg>
<div class="t" style="top:567.85px;font-size:14px;font-weight:700;color:#1a1a1a;left:428.9px;transform:scaleX(0.9573);transform-origin:left;">TK Có</div>
<svg style="position:absolute;left:493px;top:570px;" width="11" height="12" viewBox="0 0 11 12"><g fill="none" stroke="#c3c5cb" stroke-width="1.2"><path d="M3 11.5 V1 M0.5 3.5 L3 1 L5.5 3.5"/><path d="M8 0.5 V11 M5.5 8.5 L8 11 L10.5 8.5"/></g></svg>
<svg style="position:absolute;left:523px;top:570px;" width="9" height="13" viewBox="0 0 9 13"><g fill="none" stroke="#c6c8ce" stroke-width="1.1"><path d="M1.5 7.2 V2.2 Q1.5 0.8 2.9 0.8 H5.1 Q6.5 0.8 6.5 2.2 V7.2"/><path d="M0 7.5 H8"/></g><path d="M4 7.8 V12.6" stroke="#c6c8ce" stroke-width="1.7"/></svg>
<div class="t" style="top:567.85px;font-size:14px;font-weight:700;color:#1a1a1a;right:651px;transform:scaleX(0.9590);transform-origin:right;">Số tiền</div>
<svg style="position:absolute;left:658px;top:570px;" width="11" height="12" viewBox="0 0 11 12"><g fill="none" stroke="#c3c5cb" stroke-width="1.2"><path d="M3 11.5 V1 M0.5 3.5 L3 1 L5.5 3.5"/><path d="M8 0.5 V11 M5.5 8.5 L8 11 L10.5 8.5"/></g></svg>
<svg style="position:absolute;left:688px;top:570px;" width="9" height="13" viewBox="0 0 9 13"><g fill="none" stroke="#c6c8ce" stroke-width="1.1"><path d="M1.5 7.2 V2.2 Q1.5 0.8 2.9 0.8 H5.1 Q6.5 0.8 6.5 2.2 V7.2"/><path d="M0 7.5 H8"/></g><path d="M4 7.8 V12.6" stroke="#c6c8ce" stroke-width="1.7"/></svg>
<div class="t" style="top:567.85px;font-size:14px;font-weight:700;color:#1a1a1a;left:703.9px;transform:scaleX(0.9809);transform-origin:left;">Nguồn</div>
<svg style="position:absolute;left:933px;top:570px;" width="11" height="12" viewBox="0 0 11 12"><g fill="none" stroke="#c3c5cb" stroke-width="1.2"><path d="M3 11.5 V1 M0.5 3.5 L3 1 L5.5 3.5"/><path d="M8 0.5 V11 M5.5 8.5 L8 11 L10.5 8.5"/></g></svg>
<svg style="position:absolute;left:963px;top:570px;" width="9" height="13" viewBox="0 0 9 13"><g fill="none" stroke="#c6c8ce" stroke-width="1.1"><path d="M1.5 7.2 V2.2 Q1.5 0.8 2.9 0.8 H5.1 Q6.5 0.8 6.5 2.2 V7.2"/><path d="M0 7.5 H8"/></g><path d="M4 7.8 V12.6" stroke="#c6c8ce" stroke-width="1.7"/></svg>
<div class="t" style="top:567.85px;font-size:14px;font-weight:700;color:#1a1a1a;left:978.9px;transform:scaleX(0.9023);transform-origin:left;">Chương</div>
<svg style="position:absolute;left:1073px;top:570px;" width="9" height="13" viewBox="0 0 9 13"><g fill="none" stroke="#c6c8ce" stroke-width="1.1"><path d="M1.5 7.2 V2.2 Q1.5 0.8 2.9 0.8 H5.1 Q6.5 0.8 6.5 2.2 V7.2"/><path d="M0 7.5 H8"/></g><path d="M4 7.8 V12.6" stroke="#c6c8ce" stroke-width="1.7"/></svg>
<div class="t" style="top:567.85px;font-size:14px;font-weight:700;color:#1a1a1a;left:1088.9px;transform:scaleX(0.9633);transform-origin:left;">Khoản</div>
<svg style="position:absolute;left:1153px;top:570px;" width="11" height="12" viewBox="0 0 11 12"><g fill="none" stroke="#c3c5cb" stroke-width="1.2"><path d="M3 11.5 V1 M0.5 3.5 L3 1 L5.5 3.5"/><path d="M8 0.5 V11 M5.5 8.5 L8 11 L10.5 8.5"/></g></svg>
<svg style="position:absolute;left:1234px;top:568px;" width="18" height="18" viewBox="0 0 18 18"><g fill="none" stroke="#666" stroke-width="1.1" stroke-linecap="round" stroke-linejoin="round"><path d="M1 3.5 H17"/><path d="M5.3 3.5 V1.9 Q5.3 0.8 6.4 0.8 H11.6 Q12.7 0.8 12.7 1.9 V3.5"/><path d="M3.5 5.8 L4.2 15.6 Q4.3 16.6 5.3 16.6 H12.7 Q13.7 16.6 13.8 15.6 L14.5 5.8"/></g><path d="M6.6 8.6 L11 13 M11 8.6 L6.6 13" stroke="#f03a3a" stroke-width="1.3"/></svg>
<svg style="position:absolute;left:1202px;top:598px;" width="19" height="19" viewBox="0 0 19 19"><circle cx="9.5" cy="9.4" r="8" fill="none" stroke="#666" stroke-width="1.1"/><path d="M9.5 5.8 V13.1 M5.8 9.5 H13.2" stroke="#666" stroke-width="1.1"/></svg>
<svg style="position:absolute;left:1234px;top:599px;" width="18" height="18" viewBox="0 0 18 18"><g fill="none" stroke="#666" stroke-width="1.1" stroke-linecap="round" stroke-linejoin="round"><path d="M1 3.5 H17"/><path d="M5.3 3.5 V1.9 Q5.3 0.8 6.4 0.8 H11.6 Q12.7 0.8 12.7 1.9 V3.5"/><path d="M3.5 5.8 L4.2 15.6 Q4.3 16.6 5.3 16.6 H12.7 Q13.7 16.6 13.8 15.6 L14.5 5.8"/><path d="M6.8 8.8 V13.6 M10.5 8.8 V13.6"/></g></svg>
<div style="position:absolute;left:1202px;top:631px;width:21px;height:10px;overflow:hidden"><svg style="position:absolute;left:0;top:0;overflow:visible" width="19" height="19" viewBox="0 0 19 19"><circle cx="9.5" cy="9.4" r="8" fill="none" stroke="#666" stroke-width="1.1"/><path d="M9.5 5.8 V13.1 M5.8 9.5 H13.2" stroke="#666" stroke-width="1.1"/></svg></div>
<div style="position:absolute;left:1234px;top:632px;width:20px;height:9px;overflow:hidden"><svg style="position:absolute;left:0;top:0;overflow:visible" width="18" height="18" viewBox="0 0 18 18"><g fill="none" stroke="#666" stroke-width="1.1" stroke-linecap="round" stroke-linejoin="round"><path d="M1 3.5 H17"/><path d="M5.3 3.5 V1.9 Q5.3 0.8 6.4 0.8 H11.6 Q12.7 0.8 12.7 1.9 V3.5"/><path d="M3.5 5.8 L4.2 15.6 Q4.3 16.6 5.3 16.6 H12.7 Q13.7 16.6 13.8 15.6 L14.5 5.8"/><path d="M6.8 8.8 V13.6 M10.5 8.8 V13.6"/></g></svg></div>
<div class="t" style="top:648.15px;font-size:14px;font-weight:400;color:#1f1f1f;left:30px;transform:scaleX(0.9913);transform-origin:left;">Tổng số: <b>0</b> bản ghi</div>
<div style="position:absolute;left:19px;top:668px;width:1248px;height:1px;background:#c5c7cd"></div>
<svg style="position:absolute;left:20px;top:670px;" width="6" height="8" viewBox="0 0 6 8"><path d="M5 0.5 V7.5 L1 4Z" fill="#b9bcc3"/></svg>
<svg style="position:absolute;left:1260px;top:670px;" width="6" height="8" viewBox="0 0 6 8"><path d="M1 0.5 V7.5 L5 4Z" fill="#b9bcc3"/></svg>
<div style="position:absolute;left:31px;top:671px;width:503px;height:6px;background:#b6b9c1;border-radius:3px"></div>
<svg style="position:absolute;left:1267px;top:562px;" width="9" height="6" viewBox="0 0 9 6"><path d="M0.5 5.5 H8.5 L4.5 1.5Z" fill="#c3c5cb"/></svg>
<div style="position:absolute;left:1269px;top:572px;width:6px;height:58px;background:#b6b9c1;border-radius:3px"></div>
<svg style="position:absolute;left:1267px;top:661px;" width="9" height="6" viewBox="0 0 9 6"><path d="M0.5 0.5 H8.5 L4.5 4.5Z" fill="#c3c5cb"/></svg>
<div style="position:absolute;left:23px;top:699px;width:88px;height:26px;border:1px solid #fff;border-radius:4px;box-sizing:border-box"></div>
<div class="t" style="top:704.35px;font-size:14px;font-weight:700;color:#fff;left:67px;transform:translateX(-50%);">Đóng</div>
<svg style="position:absolute;left:339px;top:700px;" width="26" height="26" viewBox="0 0 26 26"><path d="M22.3 11.6 A9.9 9.9 0 1 1 19.8 5.6" fill="none" stroke="#8a8b93" stroke-width="1.4" stroke-linecap="round"/><path d="M21.5 1.6 V6.6 H16.5" fill="none" stroke="#8a8b93" stroke-width="1.4" stroke-linecap="round" stroke-linejoin="round"/></svg>
<div class="t" style="top:704.35px;font-size:14px;font-weight:700;color:#8a8b93;left:372px;transform:scaleX(0.9822);transform-origin:left;">Nạp</div>
<div style="position:absolute;left:423.5px;top:703px;width:1.5px;height:18px;background:#6f7079"></div>
<div style="position:absolute;left:572.5px;top:703px;width:1.5px;height:18px;background:#6f7079"></div>
<div style="position:absolute;left:682.5px;top:703px;width:1.5px;height:18px;background:#6f7079"></div>
<div style="position:absolute;left:794.5px;top:703px;width:1.5px;height:18px;background:#6f7079"></div>
<svg style="position:absolute;left:449px;top:701px;" width="22" height="22" viewBox="0 0 22 22"><circle cx="11" cy="11.4" r="9.8" fill="none" stroke="#fff" stroke-width="1.6"/><g fill="#fff"><circle cx="11" cy="7.4" r="1"/><circle cx="11" cy="11.4" r="1"/><circle cx="11" cy="15.4" r="1"/></g></svg>
<div class="t" style="top:704.35px;font-size:14px;font-weight:700;color:#fff;left:480.5px;transform:scaleX(0.9486);transform-origin:left;">Tiện ích</div>
<svg style="position:absolute;left:537px;top:708px;" width="10" height="6" viewBox="0 0 10 6"><path d="M0.5 0.5 H9.5 L5 5.5Z" fill="#fff"/></svg>
<svg style="position:absolute;left:597px;top:700px;" width="24" height="24" viewBox="0 0 24 24"><g fill="none" stroke="#8a8b93" stroke-width="1.6" stroke-linejoin="round" stroke-linecap="round"><path d="M5.9 6.8 V3.5 Q5.9 2.3 7.1 2.3 H18 Q19.2 2.3 19.2 3.5 V6.8"/><path d="M5.5 16.3 H3.5 Q2.5 16.3 2.5 15.3 V8.8 Q2.5 7.8 3.5 7.8 H21.5 Q22.5 7.8 22.5 8.8 V15.3 Q22.5 16.3 21.5 16.3 H19.5"/><path d="M4.8 13.7 H20.2"/><path d="M5.9 13.7 V20.6 Q5.9 21.8 7.1 21.8 H18 Q19.2 21.8 19.2 20.6 V13.7"/></g></svg>
<div class="t" style="top:704.35px;font-size:14px;font-weight:700;color:#8a8b93;left:628.5px;transform:scaleX(1.0477);transform-origin:left;">In</div>
<svg style="position:absolute;left:654px;top:708px;" width="10" height="6" viewBox="0 0 10 6"><path d="M0.5 0.5 H9.5 L5 5.5Z" fill="#8a8b93"/></svg>
<svg style="position:absolute;left:702px;top:701px;" width="18" height="22" viewBox="0 0 18 22"><g fill="none" stroke="#8a8b93" stroke-width="1.6" stroke-linejoin="round" stroke-linecap="round"><path d="M11.5 0.8 H3 Q0.8 0.8 0.8 3 V18.8 Q0.8 21 3 21 H14.8 Q17 21 17 18.8 V6.5 Z"/><path d="M11.3 0.8 V6.8 H17"/><path d="M4.5 8.2 H7.5 M4.5 12 H14 M4.5 16 H14"/></g></svg>
<div class="t" style="top:704.35px;font-size:14px;font-weight:700;color:#8a8b93;left:731.5px;transform:scaleX(0.9761);transform-origin:left;">Duyệt</div>
<svg style="position:absolute;left:813px;top:700px;" width="24" height="24" viewBox="0 0 24 24"><g fill="none" stroke="#8a8b93" stroke-width="1.6" stroke-linejoin="round" stroke-linecap="round"><path d="M1.8 6.6 H22.2"/><path d="M7.8 6.6 V3.8 Q7.8 2.1 9.5 2.1 H14.5 Q16.2 2.1 16.2 3.8 V6.6"/><path d="M5.3 8.8 L6.3 20.5 Q6.5 22.1 8.1 22.1 H15.9 Q17.5 22.1 17.7 20.5 L18.7 8.8"/><path d="M9.7 11.2 V18.3 M13.9 11.2 V18.3"/></g></svg>
<div class="t" style="top:704.35px;font-size:14px;font-weight:700;color:#8a8b93;left:846px;transform:scaleX(0.9722);transform-origin:left;">Xóa</div>
<div style="position:absolute;left:1086px;top:699px;width:88px;height:26px;border:1px solid #fff;border-radius:4px;box-sizing:border-box"></div>
<div class="t" style="top:704.35px;font-size:14px;font-weight:700;color:#fff;left:1130px;transform:translateX(-50%);">Hoãn</div>
<div style="position:absolute;left:1185px;top:699px;width:88px;height:26px;background:#5d5fef;border-radius:4px"></div>
<div class="t" style="top:704.35px;font-size:14px;font-weight:700;color:#fff;left:1229px;transform:translateX(-50%);">Cất</div>
</body></html>
